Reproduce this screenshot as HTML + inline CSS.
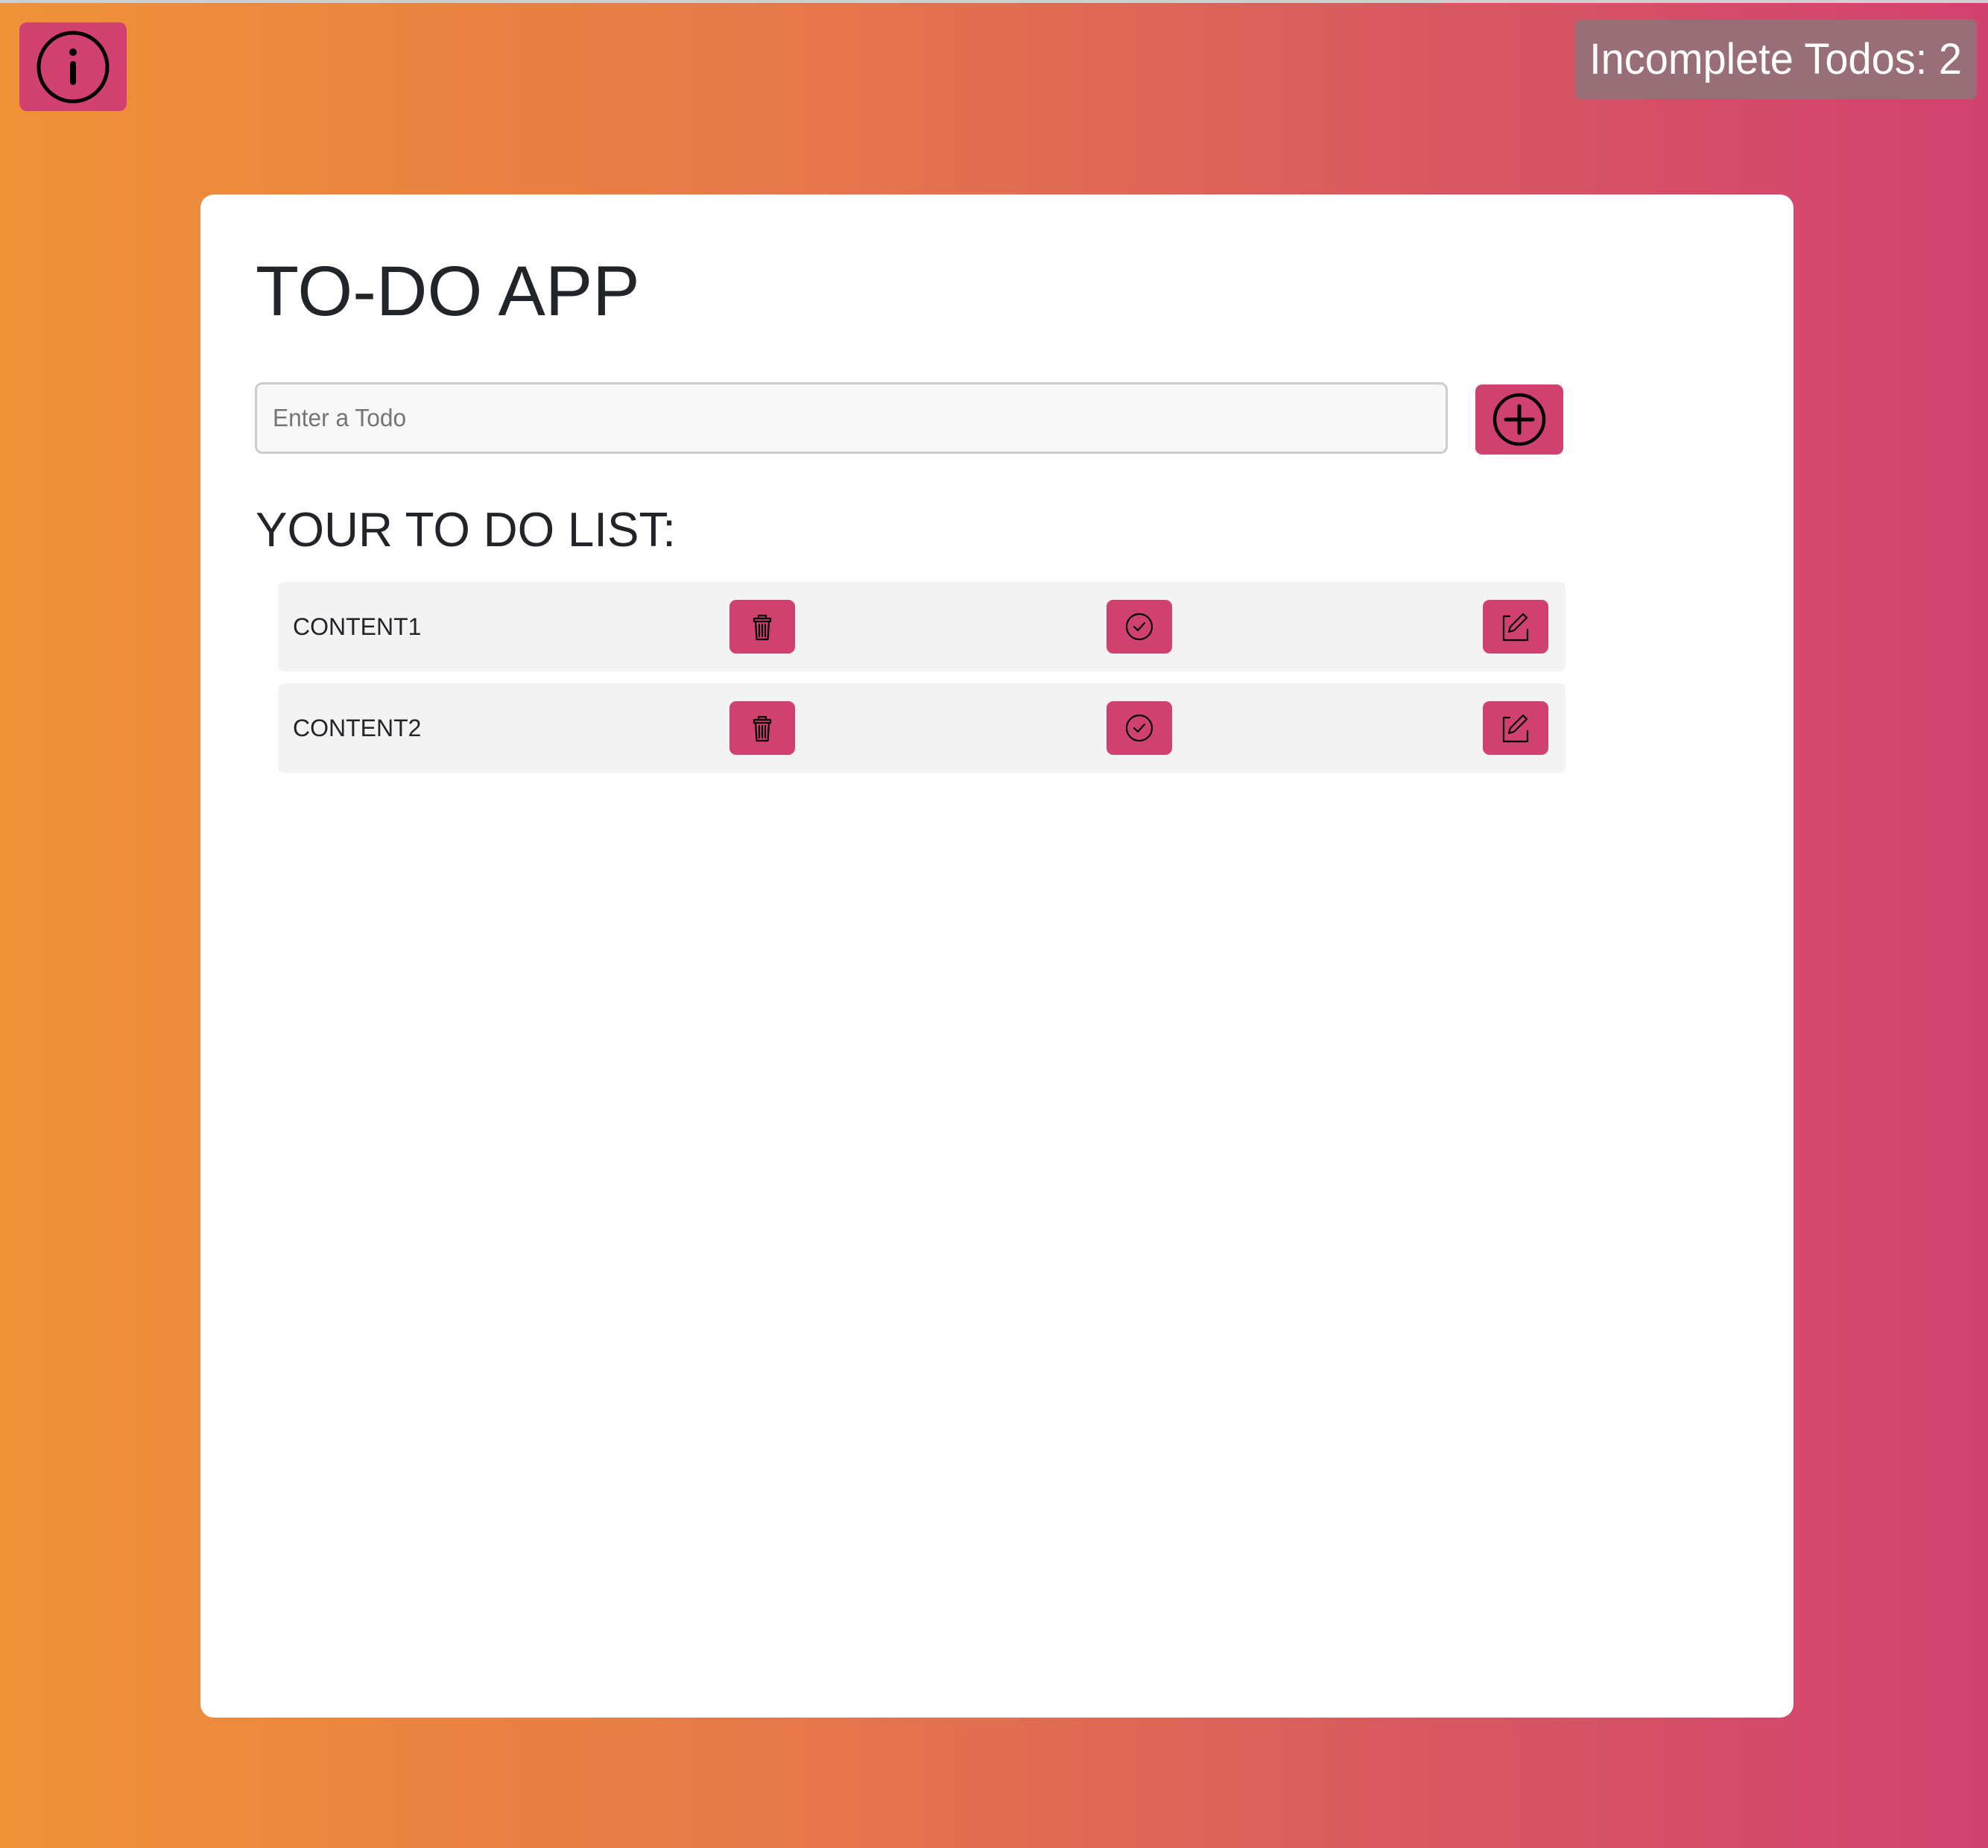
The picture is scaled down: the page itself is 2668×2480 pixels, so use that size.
<!DOCTYPE html>
<html><head><meta charset="utf-8"><style>
html,body{margin:0;padding:0}
body{width:2668px;height:2480px;position:relative;overflow:hidden;font-family:"Liberation Sans",Arial,sans-serif;background:linear-gradient(90deg,#ef9238 0%,#e6784a 40%,#d95a60 70%,#d14170 100%)}
.topline{position:absolute;left:0;top:0;width:2668px;height:4px;background:#cfcfcf}
.info{position:absolute;left:26px;top:30px;width:144px;height:119px;background:#d04170;border-radius:10px}
.badge{position:absolute;left:2114px;top:26px;width:539px;height:107px;background:#986e77;border-radius:8px;color:#fff;font-size:58px;line-height:107px;text-align:center}
.badge span{display:inline-block;transform:scaleX(0.965)}
.card{position:absolute;left:269px;top:261px;width:2138px;height:2044px;background:#fff;border-radius:18px}
h1{position:absolute;left:343px;top:336px;margin:0;font-weight:normal;font-size:95px;color:#212529;line-height:110px}
.input{position:absolute;left:342px;top:513px;width:1595px;height:90px;border:3px solid #cdcdcd;border-radius:10px;background:#f8f8f8;box-sizing:content-box}
.input span{position:absolute;left:21px;top:0;line-height:90px;font-size:33px;color:#757575;transform:scaleX(0.96);transform-origin:left center}
.add{position:absolute;left:1980px;top:516px;width:118px;height:94px;background:#d04170;border-radius:9px}
h2{position:absolute;left:343px;top:671px;margin:0;font-weight:normal;font-size:65px;color:#212529;line-height:80px;transform:scaleX(0.98);transform-origin:left center}
.row{position:absolute;left:373px;width:1728px;height:120px;background:#f3f3f3;border-radius:8px}
.row span{position:absolute;left:20px;top:0;line-height:120px;font-size:32px;color:#212529}
.btn{position:absolute;top:24px;width:88px;height:72px;background:#d04170;border-radius:9px}
.btn svg{position:absolute;left:24px;top:16px}
</style></head><body>
<div class="topline"></div>
<div class="info"><svg width="144" height="119" viewBox="0 0 144 119"><ellipse cx="72" cy="60" rx="46" ry="46" fill="none" stroke="#000" stroke-width="5"/><circle cx="72" cy="40" r="5" fill="#000"/><line x1="72" y1="56" x2="72" y2="80" stroke="#000" stroke-width="8" stroke-linecap="round"/></svg></div>
<div class="badge"><span>Incomplete Todos: 2</span></div>
<div class="card"></div>
<h1>TO-DO APP</h1>
<div class="input"><span>Enter a Todo</span></div>
<div class="add"><svg width="118" height="94" viewBox="0 0 118 94"><circle cx="59" cy="47" r="33" fill="none" stroke="#000" stroke-width="4.5"/><line x1="59" y1="29" x2="59" y2="65" stroke="#000" stroke-width="5" stroke-linecap="round"/><line x1="41" y1="47" x2="77" y2="47" stroke="#000" stroke-width="5" stroke-linecap="round"/></svg></div>
<h2>YOUR TO DO LIST:</h2>

<div class="row" style="top:781px"><span>CONTENT1</span>
<div class="btn" style="left:606px"><svg width="40" height="40" viewBox="0 0 40 40" fill="none" stroke="#000" stroke-width="2.2" stroke-linecap="round" stroke-linejoin="round"><path d="M15 5h10v4H15z"/><path d="M9 9h22v4H9z"/><path d="M11 13l1.5 24h15L29 13"/><path d="M16 17v16M20 17v16M24 17v16"/></svg></div>
<div class="btn" style="left:1112px"><svg width="40" height="40" viewBox="0 0 40 40" fill="none" stroke="#000" stroke-width="2.2" stroke-linecap="round" stroke-linejoin="round"><circle cx="20" cy="20" r="17"/><path d="M13 20l5 5 9-10"/></svg></div>
<div class="btn" style="left:1617px"><svg width="40" height="40" viewBox="0 0 40 40" fill="none" stroke="#000" stroke-width="2.2" stroke-linecap="round" stroke-linejoin="round"><path d="M12 6H4v32h32V24"/><path d="M30 3l5 5-17 17-7 2 2-7z"/></svg></div>
</div>

<div class="row" style="top:917px"><span>CONTENT2</span>
<div class="btn" style="left:606px"><svg width="40" height="40" viewBox="0 0 40 40" fill="none" stroke="#000" stroke-width="2.2" stroke-linecap="round" stroke-linejoin="round"><path d="M15 5h10v4H15z"/><path d="M9 9h22v4H9z"/><path d="M11 13l1.5 24h15L29 13"/><path d="M16 17v16M20 17v16M24 17v16"/></svg></div>
<div class="btn" style="left:1112px"><svg width="40" height="40" viewBox="0 0 40 40" fill="none" stroke="#000" stroke-width="2.2" stroke-linecap="round" stroke-linejoin="round"><circle cx="20" cy="20" r="17"/><path d="M13 20l5 5 9-10"/></svg></div>
<div class="btn" style="left:1617px"><svg width="40" height="40" viewBox="0 0 40 40" fill="none" stroke="#000" stroke-width="2.2" stroke-linecap="round" stroke-linejoin="round"><path d="M12 6H4v32h32V24"/><path d="M30 3l5 5-17 17-7 2 2-7z"/></svg></div>
</div>
</body></html>
